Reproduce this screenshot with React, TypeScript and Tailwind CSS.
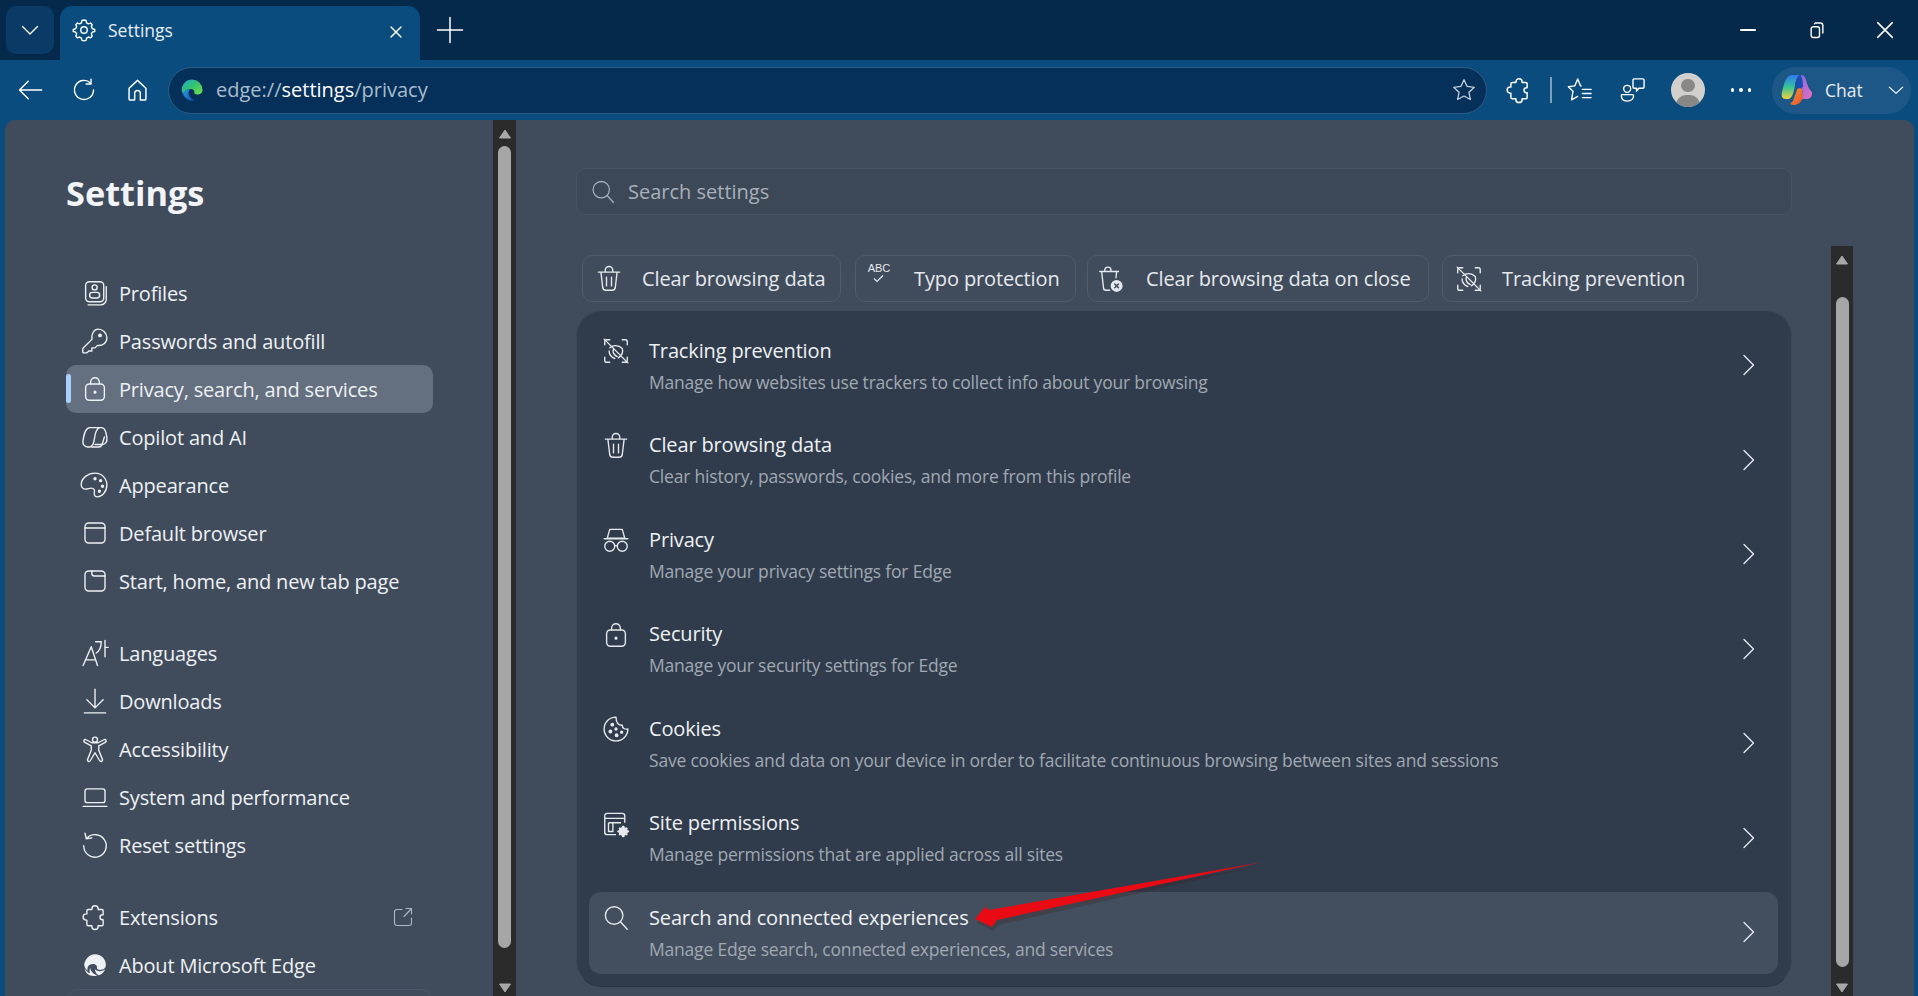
import type { ReactNode } from "react"

function Ico({ size = 30, sw = 1.1, className = "", children }: { size?: number; sw?: number; className?: string; children: ReactNode }) {
  return (
    <svg width={size} height={size} viewBox="0 0 24 24" fill="none" stroke="currentColor" strokeWidth={sw} strokeLinecap="round" strokeLinejoin="round" className={`shrink-0 ${className}`}>
      {children}
    </svg>
  )
}

const puzzle = "M9.5 5.5a2.5 2.5 0 0 1 5 0V6h3a1 1 0 0 1 1 1v3.2h-.5a2 2 0 0 0 0 4h.5V18a1 1 0 0 1-1 1h-3v.5a2.5 2.5 0 0 1-5 0V19H6.5a1 1 0 0 1-1-1v-3.5H5a2.5 2.5 0 0 1 0-5h.5V7a1 1 0 0 1 1-1h3z"

const gear = "M12 2.8l1.9.4.5 2.2 1.6.9 2.1-.7 1.4 1.5-.7 2.1.9 1.6 2.2.6v2l-2.2.6-.9 1.6.7 2.1-1.4 1.5-2.1-.7-1.6.9-.5 2.2-1.9.4-1.9-.4-.5-2.2-1.6-.9-2.1.7-1.4-1.5.7-2.1-.9-1.6-2.2-.6v-2l2.2-.6.9-1.6-.7-2.1 1.4-1.5 2.1.7 1.6-.9.5-2.2z"

const LockIcon = () => (
  <Ico>
    <rect x="4.5" y="8" width="15" height="13" rx="3" />
    <path d="M8.5 8V6.500a3.500 3.500 0 0 1 7 0V8" />
    <circle cx="12" cy="14.500" r=".7" fill="currentColor" />
  </Ico>
)

const TrashIcon = ({ size = 30 }: { size?: number }) => (
  <Ico size={size}>
    <path d="M3.500 6.500h17M9 6.500V5a3 3 0 0 1 6 0v1.500M5.500 6.500 7 19a2.500 2.500 0 0 0 2.500 2h5a2.500 2.500 0 0 0 2.500-2l1.500-12.500M10 10.500v7M14 10.500v7" />
  </Ico>
)

const TrackIcon = ({ size = 30 }: { size?: number }) => (
  <Ico size={size}>
    <path d="M3 7V4.500A1.500 1.500 0 0 1 4.500 3H7M17 3h2.500A1.500 1.500 0 0 1 21 4.500V7M21 17v2.500A1.500 1.500 0 0 1 19.500 21H17M7 21H4.500A1.500 1.500 0 0 1 3 19.500V17" />
    <path d="M2.500 2.500l19 19M7 9.500C9.500 7 14 7 17 10c1 3-1 6-3 7.500M6.500 12c0 3 2 5 4.500 6M10 10.500c-1 2 0 4.500 3 6" />
  </Ico>
)

const SearchIcon = ({ size = 30 }: { size?: number }) => (
  <Ico size={size}>
    <circle cx="10.500" cy="10" r="7" />
    <path d="M15.500 15l5.500 6" />
  </Ico>
)

const EdgeMono = () => (
  <svg width="26" height="26" viewBox="0 0 24 24" className="mx-[2px] shrink-0">
    <path fill="currentColor" d="M12 2a10 10 0 0 1 10 10c0 3-2.500 4.500-5 4.500-2 0-3.500-.8-3.200-2 .3-1-.2-3.500-3.800-3.500C6.500 11 4 14 5.500 17.500 3.500 15.500 2 14 2 11.500 3 6 7 2 12 2z" />
    <path fill="currentColor" d="M7.500 14c0 3 2.500 6 6.500 7.700C8 23.500 2.800 20 2.500 15c1 2.500 3 4.200 5 4.700-1-1.500-.5-3.700 0-5.700z" />
    <path fill="currentColor" d="M15.500 21.500c2.500-.5 5-2.800 6-5.500-1 .8-3 1.700-5 1.700-1.500 0-3.500-.5-4.500-1.700.2 3 1.500 5 3.500 5.500z" />
  </svg>
)

const navGroups: { icon: ReactNode; label: string; active?: boolean; ext?: boolean }[][] = [
  [
    {
      label: "Profiles",
      icon: (
        <Ico>
          <rect x="4.500" y="3" width="14.500" height="16" rx="3" />
          <path d="M6.500 21.500h10a4.500 4.500 0 0 0 4.500-4.500V7" />
          <circle cx="11.700" cy="7.500" r="2" />
          <rect x="7.700" y="11.500" width="8" height="4.500" rx="2.200" />
        </Ico>
      ),
    },
    {
      label: "Passwords and autofill",
      icon: (
        <Ico>
          <circle cx="16" cy="7.500" r="1" fill="currentColor" />
          <path d="M14.500 2.500a7 7 0 0 1 7 7c0 4-3.500 6.500-7.500 6L12 17.500h-2.500V20H7l-1.500 1.500H3a.8.8 0 0 1-.8-.8V18l7.500-7.500c-.8-4 1.500-8 4.800-8z" />
        </Ico>
      ),
    },
    { label: "Privacy, search, and services", active: true, icon: <LockIcon /> },
    {
      label: "Copilot and AI",
      icon: (
        <Ico>
          <path d="M8 4.500h7.500c-2 1-3.500 5-4 9-.4 3.500-1.500 6-3.500 6.500H6a4 4 0 0 1-3.700-4.500C3 11 4 4.500 8 4.500z" />
          <path d="M15.500 4.500H17c3 0 3.700 3 4.500 8 .5 3.500-1 5.500-4 5.500h-5.500" />
          <path d="M9.500 20h5.500c1.500 0 2.500-1 3-3l1.500-5" />
        </Ico>
      ),
    },
    {
      label: "Appearance",
      icon: (
        <Ico>
          <path d="M12 2.500c5.500 0 9.500 4.300 9.500 9.500s-4 9.500-7.500 9.500c-2 0-3-1.500-2.500-3.500.5-2-.5-3.500-2.500-3.500-1.500 0-3 .8-4.500.8-2 0-3.500-1.500-3.500-3.800 0-5 5.500-9 11-9z" />
          <circle cx="12" cy="7" r=".8" fill="currentColor" />
          <circle cx="16.500" cy="8.500" r=".8" fill="currentColor" />
          <circle cx="18" cy="13" r=".8" fill="currentColor" />
          <circle cx="15.500" cy="17" r=".8" fill="currentColor" />
        </Ico>
      ),
    },
    {
      label: "Default browser",
      icon: (
        <Ico>
          <rect x="4" y="4" width="16" height="16" rx="3" />
          <path d="M4 8h16" />
        </Ico>
      ),
    },
    {
      label: "Start, home, and new tab page",
      icon: (
        <Ico>
          <rect x="4" y="4" width="16" height="16" rx="3" />
          <path d="M9.500 4V6a2 2 0 0 0 2 2H20" />
        </Ico>
      ),
    },
  ],
  [
    {
      label: "Languages",
      icon: (
        <Ico>
          <path d="M2.500 22 9 7l5 15M4.500 17.500h8M12.500 3h4.500c0 4-1 7-4 9M20 2v13M20 7.500h2.500" />
        </Ico>
      ),
    },
    {
      label: "Downloads",
      icon: (
        <Ico>
          <path d="M12 2.500V17M5.500 11l6.500 6.500 6.500-6.500M3.500 21.500h17" />
        </Ico>
      ),
    },
    {
      label: "Accessibility",
      icon: (
        <Ico>
          <circle cx="12" cy="4.500" r="2" />
          <path d="M3.500 6.500 9 9.500v3.500L6 20.500a1.200 1.200 0 0 0 2.200.9L12 15l3.800 6.400a1.200 1.200 0 0 0 2.200-.9L15 13V9.500l5.500-3a1.200 1.200 0 0 0-1-2.100L14.500 7h-5L4.500 4.400a1.200 1.200 0 0 0-1 2.100z" />
        </Ico>
      ),
    },
    {
      label: "System and performance",
      icon: (
        <Ico>
          <rect x="4" y="5.500" width="16" height="11" rx="1.800" />
          <path d="M2.500 19.500h19" />
        </Ico>
      ),
    },
    {
      label: "Reset settings",
      icon: (
        <Ico>
          <path d="M5.500 6.500A9 9 0 1 1 3 12.500M4 2.500 5 7l4.500-.7" />
        </Ico>
      ),
    },
  ],
  [
    { label: "Extensions", ext: true, icon: <Ico><path d={puzzle} /></Ico> },
    { label: "About Microsoft Edge", icon: <EdgeMono /> },
  ],
]

const chips: { label: string; w: string; pl: string; gap: string; icon: ReactNode }[] = [
  { label: "Clear browsing data", w: "w-[259px]", pl: "pl-[11px]", gap: "gap-[18px]", icon: <TrashIcon /> },
  {
    label: "Typo protection",
    w: "w-[221px]",
    pl: "pl-[10px]",
    gap: "gap-[22px]",
    icon: (
      <svg width="26" height="26" viewBox="0 0 26 26" className="-mt-1.5 shrink-0">
        <text x="13" y="9" textAnchor="middle" fontSize="11" fill="currentColor" fontFamily="Liberation Sans, sans-serif">ABC</text>
        <path d="M8 15.500l3 3 6-6" fill="none" stroke="currentColor" strokeWidth="1.200" />
      </svg>
    ),
  },
  {
    label: "Clear browsing data on close",
    w: "w-[342px]",
    pl: "pl-[8px]",
    gap: "gap-[20px]",
    icon: (
      <svg width="30" height="30" viewBox="0 0 24 24" className="shrink-0">
        <path d="M3 6h15M7 6V5a2.500 2.500 0 0 1 5 0v1M4.500 6 6 19a2 2 0 0 0 2 2h3" fill="none" stroke="currentColor" strokeWidth="1.100" strokeLinecap="round" />
        <path d="M16.500 6 16 11" fill="none" stroke="currentColor" strokeWidth="1.100" strokeLinecap="round" />
        <circle cx="16.500" cy="17.500" r="4.800" fill="currentColor" />
        <path d="M15 16l3 3M18 16l-3 3" stroke="#404c5c" strokeWidth="1.200" strokeLinecap="round" />
      </svg>
    ),
  },
  { label: "Tracking prevention", w: "w-[256px]", pl: "pl-[11px]", gap: "gap-[18px]", icon: <TrackIcon /> },
]

const rows: { title: string; sub: string; icon: ReactNode; active?: boolean }[] = [
  { title: "Tracking prevention", sub: "Manage how websites use trackers to collect info about your browsing", icon: <TrackIcon /> },
  { title: "Clear browsing data", sub: "Clear history, passwords, cookies, and more from this profile", icon: <TrashIcon /> },
  {
    title: "Privacy",
    sub: "Manage your privacy settings for Edge",
    icon: (
      <Ico>
        <path d="M7 3.500h10l2 7H5zM2.500 11h19" />
        <circle cx="7" cy="17" r="4" />
        <circle cx="17" cy="17" r="4" />
        <path d="M11 16.500h2" />
      </Ico>
    ),
  },
  { title: "Security", sub: "Manage your security settings for Edge", icon: <LockIcon /> },
  {
    title: "Cookies",
    sub: "Save cookies and data on your device in order to facilitate continuous browsing between sites and sessions",
    icon: (
      <Ico>
        <path d="M12 2.500a9.500 9.500 0 1 0 9.500 9.500c-2.500.5-4.500-.5-4.500-3-2.800.3-5-1.800-5-6.500z" />
        <circle cx="9" cy="8.500" r="1" fill="currentColor" />
        <circle cx="7.500" cy="14" r="1" fill="currentColor" />
        <circle cx="12" cy="12" r=".8" fill="currentColor" />
        <circle cx="12.500" cy="17" r="1" fill="currentColor" />
        <circle cx="16.500" cy="14.500" r=".8" fill="currentColor" />
      </Ico>
    ),
  },
  {
    title: "Site permissions",
    sub: "Manage permissions that are applied across all sites",
    icon: (
      <svg width="30" height="30" viewBox="0 0 24 24" className="shrink-0">
        <g fill="none" stroke="currentColor" strokeWidth="1.100" strokeLinejoin="round">
          <path d="M12 20.500H5a2 2 0 0 1-2-2v-13a2 2 0 0 1 2-2h12a2 2 0 0 1 2 2V11" />
          <path d="M3 7.500h16M6 11h10M6 11v7h3.500v-7" />
        </g>
        <path fill="currentColor" d={gear} transform="translate(12 12) scale(.48)" />
      </svg>
    ),
  },
  { title: "Search and connected experiences", sub: "Manage Edge search, connected experiences, and services", icon: <SearchIcon />, active: true },
]

function ScrollBar({ thumbTop, thumbBottom, w }: { thumbTop: string; thumbBottom: string; w: string }) {
  return (
    <div className={`flex shrink-0 flex-col items-center bg-[#2b2b2b] ${w}`}>
      <svg width="14" height="10" viewBox="0 0 14 10" className="mt-[9px] shrink-0"><path d="M7 1l5.500 8h-11z" fill="#a8a8a8" stroke="#a8a8a8" strokeLinejoin="round" /></svg>
      <div className={`w-[13px] flex-1 rounded-full bg-[#a6a6a6] ${thumbTop} ${thumbBottom}`} />
      <svg width="14" height="10" viewBox="0 0 14 10" className="mb-[3px] shrink-0"><path d="M7 9l5.500-8h-11z" fill="#a8a8a8" stroke="#a8a8a8" strokeLinejoin="round" /></svg>
    </div>
  )
}

export default function App() {
  return (
    <div className="relative flex h-[996px] w-[1918px] flex-col overflow-hidden bg-[#0b4c7f] font-['Open_Sans',sans-serif] text-white">
      {/* Tab strip */}
      <div className="flex h-[60px] shrink-0 items-end bg-[#05294a]">
        <div className="mb-[6px] ml-[6px] flex h-[48px] w-[48px] items-center justify-center rounded-[10px] bg-[#0a3b66]">
          <Ico size={24} sw={1.4}><path d="M4.500 8.500 12 16l7.500-7.500" /></Ico>
        </div>
        <div className="ml-[6px] flex h-[54px] w-[360px] items-center rounded-t-[12px] bg-[#0b4c7f] pl-[11px] pr-[14px]">
          <Ico size={26} sw={1.3} className="mb-[6px]">
            <path d={gear} />
            <circle cx="12" cy="12" r="3" />
          </Ico>
          <span className="ml-[11px] pb-[5px] text-[17.500px] text-[#e8eef4]">Settings</span>
          <Ico size={20} sw={1.7} className="mb-[3px] ml-auto"><path d="M6 6l12 12M18 6 6 18" /></Ico>
        </div>
        <Ico size={30} sw={1.2} className="mb-[15px] ml-[15px]"><path d="M12 2v20M2 12h20" /></Ico>
        <div className="ml-auto flex h-[60px] items-center">
          <div className="mr-[51px] h-[2px] w-[16px] rounded bg-white" />
          <Ico size={20} sw={1.7} className="mr-[47px]">
            <rect x="5" y="8" width="10" height="13" rx="2.500" />
            <path d="M9 4.500 10 3.500h6A3 3 0 0 1 19 6.500v9" />
          </Ico>
          <Ico size={22} sw={1.7} className="mr-[22px]"><path d="M4 4l16 16M20 4 4 20" /></Ico>
        </div>
      </div>

      {/* Toolbar */}
      <div className="flex h-[60px] shrink-0 items-center">
        <Ico size={28} sw={1.2} className="ml-[16px]"><path d="M22 12H3M10.500 4.500 3 12l7.500 7.500" /></Ico>
        <Ico size={26} sw={1.3} className="ml-[27px]"><path d="M18 5.500A8.800 8.800 0 1 0 20.800 12M18.500 2v4.500H14" /></Ico>
        <Ico size={27} sw={1.3} className="ml-[27px]"><path d="M4.500 10 12 3l7.500 7v9.500a1 1 0 0 1-1 1h-4v-6a2.500 2.500 0 0 0-5 0v6h-4a1 1 0 0 1-1-1z" /></Ico>
        <div className="ml-[17px] flex h-[47px] w-[1319px] items-center rounded-full border border-[#2c5c87] bg-[#05305a] pl-[11px] pr-[9px]">
          <svg width="24" height="24" viewBox="0 0 24 24" className="shrink-0">
            <defs>
              <linearGradient id="eg" x1="0" y1="0" x2="1" y2="1"><stop offset="0" stopColor="#1ba8d8" /><stop offset=".5" stopColor="#35c46b" /><stop offset="1" stopColor="#74e04a" /></linearGradient>
              <linearGradient id="eb" x1="0" y1="0" x2="1" y2="1"><stop offset="0" stopColor="#2a9be0" /><stop offset="1" stopColor="#0b53b0" /></linearGradient>
            </defs>
            <path fill="url(#eg)" d="M12 1.500a10.500 10.500 0 0 1 10.500 10.500c0 3-2.500 4.500-5 4.500-2 0-3.500-.8-3.200-2 .3-1-.2-3.500-3.800-3.500C6.500 11 3.500 13.500 3 16 1.500 13 1.500 11 2 9.500 3.500 5 7 1.500 12 1.500z" />
            <path fill="url(#eb)" d="M10.500 11c-4 0-7.500 2.500-7.500 5 1.500 4 5 6.500 9 6.500 1 0 2-.1 3-.5-3.500-.5-6.500-3.500-6.500-7 0-2 1-3.500 2-4z" />
          </svg>
          <span className="ml-[12px] text-[20px] text-[#a9bccd]">edge://<span className="text-white">settings</span>/privacy</span>
          <svg width="26" height="26" viewBox="0 0 24 24" className="ml-auto shrink-0 text-[#c3d0dc]" fill="none" stroke="currentColor" strokeWidth="1.2" strokeLinejoin="round">
            <path d="M12 2.500l2.900 6.200 6.600.8-4.900 4.600 1.300 6.700L12 17.500l-5.900 3.300 1.300-6.700L2.500 9.500l6.600-.8z" />
          </svg>
        </div>
        <Ico size={30} sw={1.2} className="ml-[17px]"><path d={puzzle} /></Ico>
        <div className="ml-[16px] h-[26px] w-[1.500px] bg-[#7ea0bc]" />
        <svg width="28" height="28" viewBox="0 0 24 24" className="ml-[14px] shrink-0" fill="none" stroke="currentColor" strokeWidth="1.2" strokeLinejoin="round" strokeLinecap="round">
          <path d="M13 8.500h-.5L10 2.500 7.500 8.500 2 9.200 6 13l-1.200 7.500L10 17.500M14 11.500h7.500M14 15h7.500M14 18.500h7.500" />
        </svg>
        <svg width="28" height="28" viewBox="0 0 24 24" className="ml-[25px] shrink-0" fill="none" stroke="currentColor" strokeWidth="1.2" strokeLinejoin="round" strokeLinecap="round">
          <circle cx="7" cy="11" r="3" />
          <path d="M2.500 16h9a1 1 0 0 1 1 1c0 2.500-2 4.500-5.500 4.500S2 19.500 2 17c0-.5 0-1 .5-1z" />
          <path d="M12 3.500a1 1 0 0 1 1-1h7.500a1 1 0 0 1 1 1v6a1 1 0 0 1-1 1H17l-2 2.500v-2.500h-2a1 1 0 0 1-1-1z" />
        </svg>
        <div className="relative ml-[24px] h-[34px] w-[34px] overflow-hidden rounded-full bg-[#d2d0ce]">
          <div className="absolute left-[10px] top-[6px] h-[13px] w-[14px] rounded-full bg-[#8a8886]" />
          <div className="absolute left-[5px] top-[22px] h-[20px] w-[24px] rounded-[12px] bg-[#8a8886]" />
        </div>
        <div className="ml-[26px] flex gap-[5px]">
          <div className="h-[3.500px] w-[3.500px] rounded-full bg-white" />
          <div className="h-[3.500px] w-[3.500px] rounded-full bg-white" />
          <div className="h-[3.500px] w-[3.500px] rounded-full bg-white" />
        </div>
        <div className="ml-[21px] flex h-[47px] w-[139px] items-center rounded-full bg-[#1d5788] pl-[8px]">
          <svg width="34" height="34" viewBox="0 0 34 34" className="shrink-0">
            <defs>
              <linearGradient id="c1" x1="0" y1="0" x2="0" y2="1"><stop offset="0" stopColor="#2b7cf0" /><stop offset=".5" stopColor="#37c49a" /><stop offset="1" stopColor="#f2d13a" /></linearGradient>
              <linearGradient id="c2" x1="0" y1="0" x2="1" y2="1"><stop offset="0" stopColor="#7a6cf0" /><stop offset="1" stopColor="#f06cb8" /></linearGradient>
              <linearGradient id="c3" x1="0" y1="0" x2="1" y2="1"><stop offset="0" stopColor="#f09a3a" /><stop offset="1" stopColor="#e8502a" /></linearGradient>
            </defs>
            <path fill="url(#c1)" d="M12 2h9c-4 1-5 5-6 10-1 6-2 12-6 14H6c-4 0-5-3-4-7C4 11 6 2 12 2z" />
            <path fill="url(#c2)" d="M21 2c3 0 4 2 5 5 1 4 3 10 6 12 .5 3-1 7-5 7h-8c4-2 4-6 3-10-1-5-2-11-1-14z" />
            <path fill="url(#c3)" d="M13 32c5 0 8-2 10-8l-1-8-4-2-5 14-3 3z" />
            <path fill="#1b4fae" d="M20 2c2 1 3 6 3 12l-6 2-2-4c1-5 2-9 5-10z" />
          </svg>
          <span className="ml-[11px] text-[17.500px] text-[#e8eef4]">Chat</span>
          <Ico size={20} sw={1.4} className="ml-[23px]"><path d="M4 8.500 12 16l8-7.500" /></Ico>
        </div>
      </div>

      {/* Page */}
      <div className="mx-[4px] ml-[5px] flex min-h-0 flex-1 overflow-hidden rounded-t-[10px] bg-[#404c5c]">
        <aside className="flex w-[511px] shrink-0">
          <div className="min-w-0 flex-1 pl-[61px]">
            <h1 className="mt-[50px] flex h-[46px] items-center text-[34.300px] font-bold text-[#f2f4f7]">Settings</h1>
            <nav className="mt-[53px] w-[367px]">
              {navGroups.map((group, i) => (
                <div key={i} className={i > 0 ? "mt-[24px]" : ""}>
                  {group.map((item) => (
                    <div key={item.label} className={`relative flex h-[48px] items-center gap-[9px] rounded-[10px] pl-[14px] pr-[18px] text-[20px] tracking-[-0.18px] text-[#eef1f4] ${item.active ? "bg-[#64707f]" : ""}`}>
                      {item.active && <div className="absolute left-0 top-[9px] h-[29px] w-[5px] rounded-full bg-[#a8d0ff]" />}
                      {item.icon}
                      <span className="whitespace-nowrap pt-[2px]">{item.label}</span>
                      {item.ext && (
                        <Ico size={24} sw={1.1} className="ml-auto text-[#aeb6c0]">
                          <path d="M20.500 13v5a2.500 2.500 0 0 1-2.500 2.500H6A2.500 2.500 0 0 1 3.500 18V7A2.500 2.500 0 0 1 6 4.500h5M13 11.500 20.500 3.500M15 3.500h5.500v5.500" />
                        </Ico>
                      )}
                    </div>
                  ))}
                </div>
              ))}
              <div className="h-[20px] rounded-t-[12px] border border-[#4c5869]" />
            </nav>
          </div>
          <ScrollBar w="w-[23px]" thumbTop="mt-[7px]" thumbBottom="mb-[35px]" />
        </aside>

        <main className="flex min-w-0 flex-1 flex-col pl-[60px] pt-[48px]">
          <div className="flex h-[47px] w-[1216px] shrink-0 items-center rounded-[10px] border border-[#485463] bg-[#3c4856] pl-[12px] text-[20px] text-[#a8b0bb]">
            <SearchIcon size={28} />
            <span className="ml-[11px]">Search settings</span>
          </div>
          <div className="mt-[31px] flex min-h-0 flex-1">
            <div className="w-[1216px] shrink-0 pt-[9px]">
              <div className="ml-[6px] flex">
                {chips.map((c, i) => (
                  <div key={c.label} className={`flex h-[47px] items-center rounded-[10px] border border-[#505c6b] text-[20px] tracking-[-0.12px] text-[#e6e9ed] ${i === 0 ? "" : i === 2 ? "ml-[11px]" : i === 1 ? "ml-[14px]" : "ml-[13px]"} ${c.w} ${c.pl} ${c.gap}`}>
                    {c.icon}
                    <span className="whitespace-nowrap">{c.label}</span>
                  </div>
                ))}
              </div>
              <div className="mt-[8px] flex h-[677px] flex-col gap-[12.500px] rounded-[26px] border border-[#3c4858] border-b-[#2a3441] bg-[#303c4c] pb-[14px] pl-[12px] pr-[13px] pt-[14px]">
                {rows.map((r) => (
                  <div key={r.title} className={`flex h-[82px] shrink-0 items-center rounded-[12px] pl-[12px] pr-[18px] ${r.active ? "bg-[#434f5e]" : ""}`}>
                    <div className="flex h-full w-[48px] shrink-0 items-start pt-[11px] text-[#e6e9ed]">{r.icon}</div>
                    <div className="-mt-[2px] min-w-0 flex-1">
                      <div className="text-[20px] leading-[30px] tracking-[-0.15px] text-[#eef1f4]">{r.title}</div>
                      <div className="mt-[3px] text-[17.500px] leading-[26px] tracking-[-0.2px] text-[#a0a8b2]">{r.sub}</div>
                    </div>
                    <Ico size={24} sw={1.4} className="mb-[2px] text-[#e6e9ed]"><path d="M8 2.500 17.500 12 8 21.500" /></Ico>
                  </div>
                ))}
              </div>
            </div>
            <div className="ml-[39px]">
              <ScrollBar w="w-[22px] h-full" thumbTop="mt-[32px]" thumbBottom="mb-[16px]" />
            </div>
          </div>
        </main>
      </div>

      {/* Red annotation arrow */}
      <svg className="pointer-events-none absolute left-0 top-0" width="1918" height="996" viewBox="0 0 1918 996">
        <polygon points="1263,863 997,923 992,929 976,921 986,909 990,913" fill="#3a2020" opacity=".3" transform="translate(1 2)" />
        <polygon points="1263,862 997,920 992,927 975,919 985,907 989,910" fill="#ea0a14" />
      </svg>
    </div>
  )
}
